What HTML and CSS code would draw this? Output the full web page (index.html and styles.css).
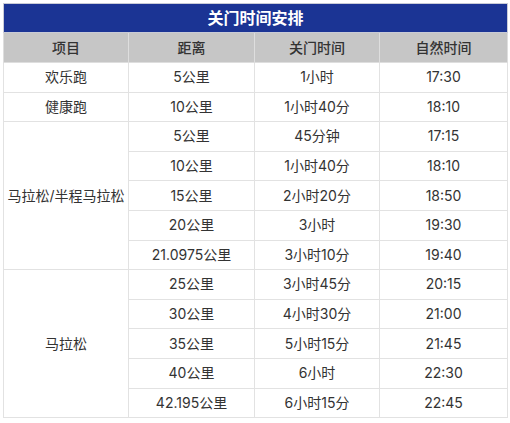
FILE: index.html
```html
<!DOCTYPE html>
<html lang="zh">
<head>
<meta charset="utf-8">
<link rel="stylesheet" href="styles.css">
</head>
<body>
<table class="sched">
  <colgroup>
    <col class="c1"><col class="c2"><col class="c3"><col class="c4">
  </colgroup>
  <thead>
    <tr class="title"><th colspan="4">关门时间安排</th></tr>
    <tr class="head"><th>项目</th><th>距离</th><th>关门时间</th><th>自然时间</th></tr>
  </thead>
  <tbody>
    <tr><td>欢乐跑</td><td>5公里</td><td>1小时</td><td>17:30</td></tr>
    <tr><td>健康跑</td><td>10公里</td><td>1小时40分</td><td>18:10</td></tr>
    <tr><td rowspan="5">马拉松/半程马拉松</td><td>5公里</td><td>45分钟</td><td>17:15</td></tr>
    <tr><td>10公里</td><td>1小时40分</td><td>18:10</td></tr>
    <tr><td>15公里</td><td>2小时20分</td><td>18:50</td></tr>
    <tr><td>20公里</td><td>3小时</td><td>19:30</td></tr>
    <tr><td>21.0975公里</td><td>3小时10分</td><td>19:40</td></tr>
    <tr><td rowspan="5">马拉松</td><td>25公里</td><td>3小时45分</td><td>20:15</td></tr>
    <tr><td>30公里</td><td>4小时30分</td><td>21:00</td></tr>
    <tr><td>35公里</td><td>5小时15分</td><td>21:45</td></tr>
    <tr><td>40公里</td><td>6小时</td><td>22:30</td></tr>
    <tr><td>42.195公里</td><td>6小时15分</td><td>22:45</td></tr>
  </tbody>
</table>
</body>
</html>
```
FILE: styles.css
```css
html, body {
  margin: 0;
  padding: 0;
  background: #ffffff;
}
body {
  padding: 3px 0 0 3px;
  font-family: Inter, "Noto Sans CJK SC", "Noto Sans", sans-serif;
  color: #333333;
}
.sched {
  border-collapse: collapse;
  table-layout: fixed;
  width: 504px;
  border: 1px solid #e2e2e2;
}
.c1 { width: 125px; }
.c2 { width: 126px; }
.c3 { width: 125px; }
.c4 { width: 128px; }
.sched th, .sched td {
  border: 1px solid #e2e2e2;
  text-align: center;
  vertical-align: middle;
  padding: 0;
  font-size: 14px;
  line-height: 20px;
}
.title th {
  background: #1b3494;
  color: #ffffff;
  font-size: 16px;
  font-weight: 700;
  height: 28px;
  border-color: #c9cbd6;
}
.head th {
  background: #c6c6c6;
  color: #333333;
  font-weight: 500;
  height: 29px;
  border-color: #dedede;
}
.sched td {
  height: 28.6px;
  font-weight: 400;
}
```
